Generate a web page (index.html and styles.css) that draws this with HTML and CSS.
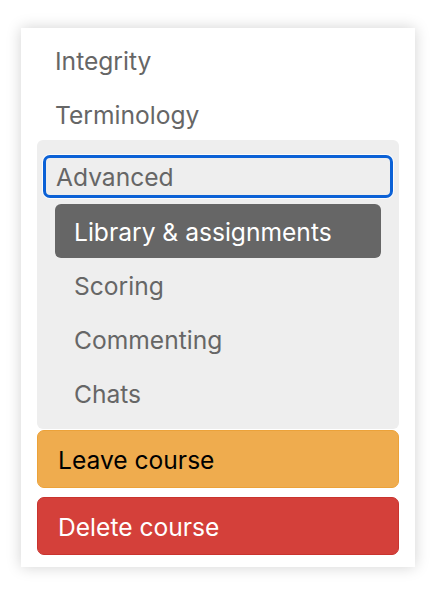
FILE: index.html
```html
<!DOCTYPE html>
<html lang="en">
<head>
<meta charset="utf-8">
<title>Course menu</title>
<link rel="stylesheet" href="styles.css">
</head>
<body>
<div class="card">
  <nav class="menu">
    <a class="item">Integrity</a>
    <a class="item">Terminology</a>
    <div class="group">
      <button class="group-head">Advanced</button>
      <div class="sub">
        <a class="sub-item active">Library &amp; assignments</a>
        <a class="sub-item">Scoring</a>
        <a class="sub-item">Commenting</a>
        <a class="sub-item">Chats</a>
      </div>
    </div>
    <button class="btn btn-warning">Leave course</button>
    <button class="btn btn-danger">Delete course</button>
  </nav>
</div>
</body>
</html>
```

FILE: styles.css
```css
html, body {
  margin: 0;
  background: #ffffff;
}
body {
  padding: 28px 21px;
  font-family: Inter, "Noto Sans", "Liberation Sans", sans-serif;
  font-size: 24.6px;
}
.card {
  width: 394px;
  box-sizing: border-box;
  background: #fff;
  padding: 4px 16px 12px;
  box-shadow: 0 0 14px rgba(0, 0, 0, 0.18);
}
.menu {
  display: flex;
  flex-direction: column;
}
.item {
  display: block;
  height: 54px;
  box-sizing: border-box;
  padding-top: 2px;
  line-height: 54px;
  padding-left: 18px;
  color: #666;
}
.group {
  background: #eeeeee;
  border-radius: 6px;
  padding: 15px 6px 9px;
  display: flex;
  flex-direction: column;
}
.group-head {
  font: inherit;
  text-align: left;
  height: 43px;
  box-sizing: border-box;
  border: 3px solid #0b61d6;
  border-radius: 7px;
  background: #eeeeee;
  color: #666;
  padding: 1px 0 0 10px;
  line-height: 37px;
  box-shadow: 0 0 0 1px rgba(255, 255, 255, 0.8);
}
.sub {
  display: flex;
  flex-direction: column;
  margin: 6px 12px 0;
}
.sub-item {
  display: block;
  height: 54px;
  box-sizing: border-box;
  padding-top: 2px;
  line-height: 52px;
  padding-left: 19px;
  color: #666;
  border-radius: 6px;
}
.sub-item.active {
  background: #666666;
  color: #fff;
}
.btn {
  font: inherit;
  text-align: left;
  height: 58px;
  box-sizing: border-box;
  border-radius: 7px;
  padding: 1px 0 0 20px;
  border: 1px solid transparent;
}
.btn-warning {
  margin-top: 1px;
  background: #efac4e;
  border-color: #eca239;
  color: #000;
}
.btn-danger {
  margin-top: 9px;
  background: #d4403a;
  border-color: #c9342f;
  color: #fff;
}
```
